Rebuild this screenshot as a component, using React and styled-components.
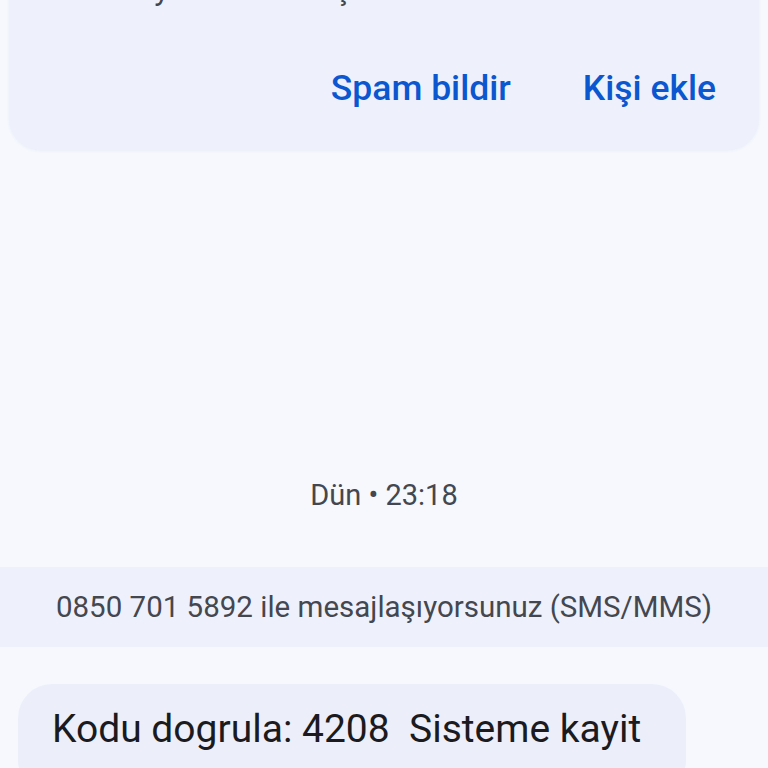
import React from 'react'
import styled, { createGlobalStyle } from 'styled-components'

const GlobalStyle = createGlobalStyle`
    html, body {
        margin: 0;
        padding: 0;
        background: #f6f8fe;
    }
    * {
        box-sizing: border-box;
    }
`

const Screen = styled.div`
    width: 768px;
    height: 768px;
    overflow: hidden;
    display: flex;
    flex-direction: column;
    background: #f6f8fe;
    font-family: Roboto, "Noto Sans", "Liberation Sans", sans-serif;

    & > * {
        flex-shrink: 0;
    }
`

// the card starts above the screen, only the tail of its first line shows
const InfoCard = styled.div`
    margin: -51px 9px 0;
    padding: 20px 43px 38px;
    background: #eef1fc;
    border-radius: 0 0 32px 32px;
    box-shadow: 0 1px 3px rgba(40, 60, 120, 0.06);
    display: flex;
    flex-direction: column;
    gap: 55px;
`

const InfoText = styled.p`
    margin: 0;
    font-size: 32px;
    line-height: 40px;
    color: #44474f;
    white-space: nowrap;
`

const Actions = styled.div`
    display: flex;
    justify-content: flex-end;
    gap: 72px;
`

const ActionButton = styled.button`
    border: none;
    background: none;
    padding: 0;
    font-family: inherit;
    font-size: 35.5px;
    line-height: 48px;
    font-weight: 500;
    color: #0b57d0;
    cursor: pointer;
`

const Timestamp = styled.div`
    margin-top: 327px;
    text-align: center;
    font-size: 29px;
    line-height: 36px;
    color: #44474f;
`

const Banner = styled.div`
    margin-top: 54px;
    height: 80px;
    display: flex;
    align-items: center;
    justify-content: center;
    background: #eef1fb;
    font-size: 29.5px;
    color: #44474f;
`

const Bubble = styled.div`
    margin: 37px 0 0 18px;
    width: 668px;
    padding: 20px 34px 40px;
    background: #eceffa;
    border-radius: 34px;
    font-size: 39px;
    line-height: 50px;
    color: #1b1b1f;
    white-space: pre;
`

const App = () => {
  return (
    <Screen>
      <GlobalStyle />
      <InfoCard>
        <InfoText>Bu kez yeni bir konuşma</InfoText>
        <Actions>
          <ActionButton>Spam bildir</ActionButton>
          <ActionButton>Kişi ekle</ActionButton>
        </Actions>
      </InfoCard>
      <Timestamp>Dün • 23:18</Timestamp>
      <Banner>0850 701 5892 ile mesajlaşıyorsunuz (SMS/MMS)</Banner>
      <Bubble>{'Kodu dogrula: 4208  Sisteme kayit'}</Bubble>
    </Screen>
  )
}

export default App
